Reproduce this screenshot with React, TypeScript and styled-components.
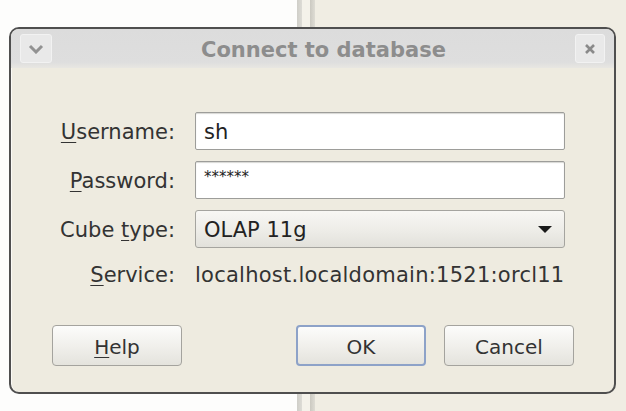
import styled, { createGlobalStyle } from "styled-components";

const GlobalStyle = createGlobalStyle`
  html, body {
    margin: 0;
    padding: 0;
    background: #f0ede3;
  }
  body {
    font-family: "DejaVu Sans", "Liberation Sans", sans-serif;
  }
`;

const Desktop = styled.div`
  position: relative;
  display: flex;
  width: 626px;
  height: 411px;
  overflow: hidden;
`;

const SidePane = styled.div`
  width: 297px;
  background: #fdfdfc;
`;

// two thin rails of the split pane behind the window
const Splitter = styled.div`
  width: 18px;
  background: linear-gradient(
    to right,
    #cfcec8 0,
    #dddcd6 5px,
    #f4f2ea 5px,
    #f4f2ea 13px,
    #cbc9c1 13px,
    #dedcd4 18px
  );
`;

const Workspace = styled.div`
  flex: 1;
  background: #f0ede3;
`;

const Dialog = styled.div`
  position: absolute;
  left: 9px;
  top: 27px;
  width: 607px;
  height: 367px;
  box-sizing: border-box;
  border: 2px solid #4f4f4f;
  border-radius: 10px;
  background: #eeebe0;
  overflow: hidden;
  display: flex;
  flex-direction: column;
  box-shadow: inset 1px 0 0 #fbfaf6;
`;

const TitleBar = styled.div`
  height: 39px;
  flex: none;
  display: flex;
  align-items: center;
  padding: 0 9px;
  background: linear-gradient(#dcdcdc, #dedede 85%, #e8e7e2);
`;

const Title = styled.div`
  flex: 1;
  text-align: center;
  font-size: 21px;
  font-weight: bold;
  color: #8d8d8d;
  padding: 3px 0 0 20px;
`;

const TitleButton = styled.div<{ $w: number }>`
  width: ${(p) => p.$w}px;
  height: 29px;
  box-sizing: border-box;
  border-radius: 3px;
  border: 1px solid #f2f2f2;
  background: #e9e9e9;
  display: flex;
  align-items: center;
  justify-content: center;
`;

const Body = styled.div`
  flex: 1;
  padding-top: 44px;
`;

const Form = styled.div`
  display: grid;
  grid-template-columns: 164px 370px;
  grid-template-rows: 38px 38px 38px 30px;
  column-gap: 20px;
  row-gap: 11px;
  align-items: center;
`;

const Label = styled.label`
  text-align: right;
  font-size: 21px;
  color: #333;
  white-space: nowrap;
  padding-top: 2px;
`;

const Key = styled.u`
  text-decoration-thickness: 1px;
  text-underline-offset: 3px;
`;

const Field = styled.div`
  height: 38px;
  box-sizing: border-box;
  border: 1px solid #9d9d9a;
  border-radius: 2px;
  background: #fff;
  box-shadow: inset 0 1px 1px #d8d8d4;
  display: flex;
  align-items: center;
  padding: 2px 8px 0;
  font-size: 21px;
  color: #222;
`;

const Secret = styled.span`
  font-size: 15px;
  letter-spacing: 0;
  margin-top: -8px;
`;

const Select = styled(Field)`
  background: linear-gradient(#f8f7f4, #ecebe6 60%, #e2e1db);
  box-shadow: none;
  border-color: #a5a49f;
  border-radius: 3px;
  justify-content: space-between;
  padding-right: 12px;
`;

const Value = styled.div`
  font-size: 21px;
  color: #333;
  white-space: nowrap;
  letter-spacing: 0.25px;
  padding-top: 2px;
`;

const ButtonRow = styled.div`
  display: flex;
  gap: 18px;
  margin-top: 36px;
  padding: 0 40px 0 41px;
`;

const Button = styled.button<{ $default?: boolean }>`
  width: 130px;
  height: 41px;
  box-sizing: border-box;
  border: ${(p) => (p.$default ? "2px solid #8da2c8" : "1px solid #a4a39e")};
  border-radius: 4px;
  background: linear-gradient(#fcfcfb, #f1f0ec 50%, #e4e3dd);
  font-family: "DejaVu Sans", "Liberation Sans", sans-serif;
  font-size: 20px;
  color: #333;
  padding: 3px 0 0;

  &:first-child {
    margin-right: auto;
  }
`;

const ChevronIcon = () => (
  <svg width="16" height="10" viewBox="0 0 16 10">
    <polyline points="2,2 8,8 14,2" fill="none" stroke="#929292" strokeWidth="3" />
  </svg>
);

const CloseIcon = () => (
  <svg width="12" height="12" viewBox="0 0 12 12">
    <path d="M2 2 L10 10 M10 2 L2 10" stroke="#8a8a8a" strokeWidth="2.6" />
  </svg>
);

const CaretIcon = () => (
  <svg width="14" height="8" viewBox="0 0 14 8">
    <polygon points="0,0 14,0 7,7" fill="#1a1a1a" />
  </svg>
);

const App = () => {
  return (
    <>
      <GlobalStyle />
      <Desktop>
        <SidePane />
        <Splitter />
        <Workspace />
        <Dialog>
          <TitleBar>
            <TitleButton $w={32}>
              <ChevronIcon />
            </TitleButton>
            <Title>Connect to database</Title>
            <TitleButton $w={30}>
              <CloseIcon />
            </TitleButton>
          </TitleBar>
          <Body>
            <Form>
              <Label>
                <Key>U</Key>sername:
              </Label>
              <Field>sh</Field>
              <Label>
                <Key>P</Key>assword:
              </Label>
              <Field>
                <Secret>******</Secret>
              </Field>
              <Label>
                Cube <Key>t</Key>ype:
              </Label>
              <Select>
                <span>OLAP 11g</span>
                <CaretIcon />
              </Select>
              <Label>
                <Key>S</Key>ervice:
              </Label>
              <Value>localhost.localdomain:1521:orcl11</Value>
            </Form>
            <ButtonRow>
              <Button>
                <Key>H</Key>elp
              </Button>
              <Button $default>OK</Button>
              <Button>Cancel</Button>
            </ButtonRow>
          </Body>
        </Dialog>
      </Desktop>
    </>
  );
};

export default App;
